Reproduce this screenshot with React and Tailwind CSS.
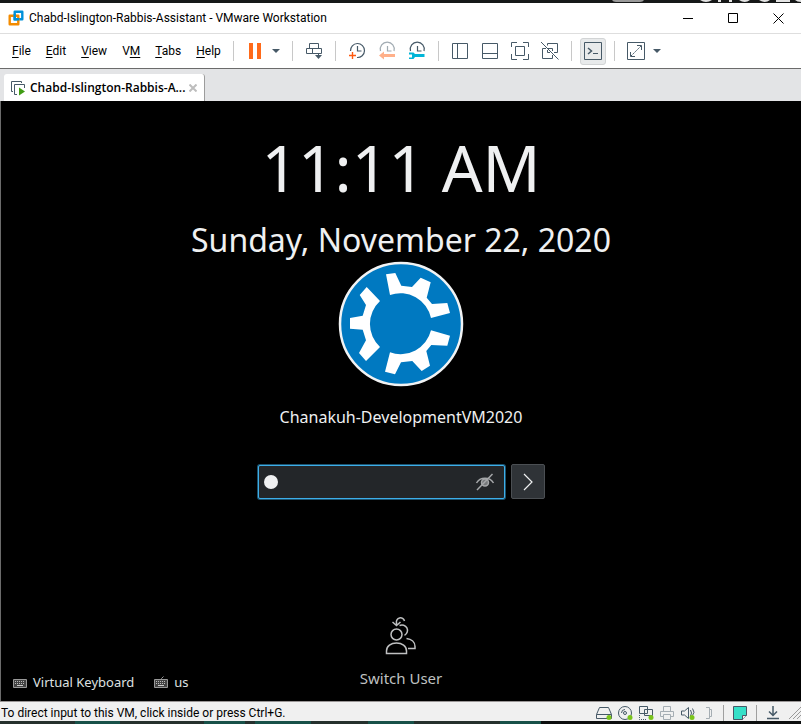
import React from 'react';

const ink = '#465967';

function Icon({ w = 20, h = 20, children, stroke = ink, sw = 1, className = '' }) {
  return (
    <svg width={w} height={h} viewBox={`0 0 ${w} ${h}`} fill="none" stroke={stroke} strokeWidth={sw} className={`shrink-0 ${className}`} aria-hidden="true">
      {children}
    </svg>
  );
}

function Separator() {
  return <span className="mx-[6px] h-5 w-px shrink-0 bg-[#c8c8c8]" />;
}

function ToolButton({ label, children }) {
  return (
    <button aria-label={label} className="flex h-7 w-[30px] shrink-0 items-center justify-center">
      {children}
    </button>
  );
}

function Caret({ label }) {
  return (
    <button aria-label={label} className="flex h-7 w-3 shrink-0 items-center justify-center">
      <svg width="8" height="4" viewBox="0 0 8 4" fill={ink} aria-hidden="true"><path d="M0 0h8L4 4z" /></svg>
    </button>
  );
}

function MenuItem({ before = '', hot, after = '' }) {
  return (
    <button className="pl-2 pr-[7px]">
      {before}<span className="underline underline-offset-2">{hot}</span>{after}
    </button>
  );
}

function TitleBar() {
  return (
    <header className="flex h-[30px] shrink-0 items-center bg-white pl-2">
      <Icon w={16} h={16} stroke="none">
        <path d="M6.7 1.7h7.6v7.6H6.7z" stroke="#0091da" strokeWidth="2.4" strokeLinejoin="round" />
        <path d="M1.7 5.7h8.6v8.6H1.7z" stroke="#f38b00" strokeWidth="2.4" strokeLinejoin="round" />
        <path d="M6.7 4v5.3H11" stroke="#0091da" strokeWidth="2.4" />
      </Icon>
      <h1 className="flex-1 truncate pl-[5px]">Chabd-Islington-Rabbis-Assistant - VMware Workstation</h1>
      <button aria-label="Minimize" className="flex h-full w-[45px] items-center justify-center"><Icon w={11} h={11} stroke="#000"><path d="M0 5.5h10" /></Icon></button>
      <button aria-label="Maximize" className="flex h-full w-[45px] items-center justify-center"><Icon w={11} h={11} stroke="#000"><path d="M.5.5h9v9h-9z" /></Icon></button>
      <button aria-label="Close" className="flex h-full w-[45px] items-center justify-center"><Icon w={11} h={11} stroke="#000"><path d="M.5.5l10 10M10.5.5l-10 10" /></Icon></button>
    </header>
  );
}

function Toolbar() {
  return (
    <div className="flex h-[35px] shrink-0 items-center border-t border-[#dedede] bg-white pl-1">
      <nav className="flex w-[223px] shrink-0">
        <MenuItem hot="F" after="ile" />
        <MenuItem hot="E" after="dit" />
        <MenuItem hot="V" after="iew" />
        <MenuItem before="V" hot="M" />
        <MenuItem hot="T" after="abs" />
        <MenuItem hot="H" after="elp" />
      </nav>
      <Separator />
      <ToolButton label="Suspend"><Icon w={12} h={16} stroke="none"><path fill="#ff6a1a" d="M0 0h4v16H0zM8 0h4v16H8z" /></Icon></ToolButton>
      <Caret label="Power options" />
      <span className="w-1" />
      <Separator />
      <ToolButton label="Send Ctrl+Alt+Del">
        <Icon><path d="M5.500 2.500h9v5h-9zM2.500 7.500h6v5h-6zM8.500 7.500h9v5h-9zM14.500 12v3" /><path d="M11 14h7l-3.500 4z" fill={ink} stroke="none" /></Icon>
      </ToolButton>
      <Separator />
      <ToolButton label="Take snapshot">
        <Icon><path d="M3.500 10A7 7 0 1 1 10 16.500" strokeWidth="1.200" /><path d="M10.500 5v5h4" strokeWidth="1.200" /><path d="M2 14.500h7M5.500 11v7" stroke="#ff5a10" strokeWidth="1.400" /></Icon>
      </ToolButton>
      <ToolButton label="Revert snapshot">
        <Icon><g opacity=".5"><path d="M3.500 10a7 7 0 1 1 13.500 0" strokeWidth="1.200" /><path d="M10.500 5v5h4" strokeWidth="1.200" /></g><path d="M2 14.500l5-4V13h11v3H7v2.500z" fill="#ffb08a" stroke="none" /></Icon>
      </ToolButton>
      <ToolButton label="Manage snapshots">
        <Icon><path d="M3.500 10a7 7 0 1 1 13.500 0" strokeWidth="1.200" /><path d="M10.500 5v5h4" strokeWidth="1.200" /><path d="M2 11.500h4.500l1.500 1.500h9.500v3H8l-1.500 2H2v-1.500h3v-3H2z" fill="#00b5d8" stroke="none" /></Icon>
      </ToolButton>
      <Separator />
      <ToolButton label="Show library"><Icon><path d="M2.500 2.500h15v15h-15zM7.500 2.500v15" /></Icon></ToolButton>
      <ToolButton label="Show thumbnails"><Icon><path d="M2.500 2.500h15v15h-15zM2.500 12.500h15" /></Icon></ToolButton>
      <ToolButton label="Full screen"><Icon><path d="M1.500 6V1.500H7M13 1.500h5.500V6M18.500 13v5.500H13M7 18.500H1.500V13M5.500 5.500h9v9h-9z" /></Icon></ToolButton>
      <ToolButton label="Unity mode"><Icon><path d="M7.500 2.500h10v9H14M6 7.500H2.500v10h10V14M7.500 2.500v2M8 7.500h4.500V10M7.500 9v2.500H10" /><path d="M1 1l17.500 17.500" /></Icon></ToolButton>
      <Separator />
      <ToolButton label="Console view">
        <span className="flex h-[27px] w-[26px] shrink-0 items-center justify-center rounded-[3px] border border-[#d2d4d5] bg-[#e8eaeb]">
          <Icon w={18} h={18}><path d="M.5.5h17v17H.5zM9 11.500h5" /><path d="M4 6l3.500 3L4 12" strokeWidth="1.500" /></Icon>
        </span>
      </ToolButton>
      <Separator />
      <ToolButton label="Stretch guest"><Icon w={18} h={18}><path d="M.5.5h17v17H.5zM10 3.500h4.500V8M3.500 10v4.500H8" /><path d="M4 14L14 4" strokeDasharray="2 1" /></Icon></ToolButton>
      <Caret label="Stretch options" />
    </div>
  );
}

function TabStrip() {
  return (
    <div className="flex h-[33px] shrink-0 items-end border-t border-[#6b6b6b] bg-[#e3e4e6] pl-1">
      <div className="flex h-[27px] w-[201px] items-center rounded-t-[3px] border-r border-[#9c9c9c] bg-white pl-[6px]">
        <Icon w={16} h={16}>
          <path d="M3 11.500H1.500v-10h10V3M7 14.500H4.500v-10h10V8" />
          <path d="M9 7.500l6 4-6 4z" fill="#3f9c14" stroke="none" />
        </Icon>
        <span className="whitespace-nowrap pl-1 font-['Open_Sans','Noto_Sans',sans-serif] font-semibold">Chabd-Islington-Rabbis-A...</span>
        <button aria-label="Close tab" className="ml-auto mr-[7px]"><Icon w={8} h={8} stroke="#bdbdbd" sw={2}><path d="M.5.5l7 7M7.500.5l-7 7" /></Icon></button>
      </div>
    </div>
  );
}

function Avatar() {
  return (
    <svg width="126" height="126" viewBox="0 0 126 126" role="img" aria-label="Kubuntu" className="shrink-0">
      <circle cx="63" cy="63" r="61" fill="#0079c1" stroke="#f1f3f4" strokeWidth="2.500" />
      <path fill="#fff" d="M48 13.300L57.300 12 63.300 24.700 74 26 82.700 16.700 92.700 21.300 88.700 36.700 94 43 109.300 42 112 52 93 57A31.300 31.300 0 0 0 52 34z" />
      <path fill="#fff" d="M93 69.300L112 74.700 109.300 84.700 93.300 84 88.300 90 92 104.700 83.700 110 74.300 100 63 101.300 57 113.300 47 110.700 52 91.300A31.300 31.300 0 0 0 93 69.300z" />
      <path fill="#fff" d="M28.700 26L42 40A31.300 31.300 0 0 0 42 86L28 100 21 92 28 79.300 24.700 68.700 12 67.700V57L24.700 54.700 28 44 21.700 34z" />
    </svg>
  );
}

function Keyboard({ cable }) {
  return (
    <Icon w={14} h={12} stroke="#999">
      {cable && <path d="M7.500 4V2.500l2-2" />}
      <path d="M.5 3.500h13v8H.5z" fill="#444" />
      <path d="M2 5.500h10M2 7.500h10" stroke="#bbb" strokeDasharray="1 1" />
      <path d="M4 9.500h6" stroke="#ccc" />
    </Icon>
  );
}

function LockScreen() {
  return (
    <main className="flex flex-1 flex-col items-center border-l border-[#6b6b6b] bg-black pt-[23px] font-['Noto_Sans',sans-serif] text-[#eff0f1]">
      <time className="text-[64px] leading-[88px]">11:11 AM</time>
      <p className="mt-[6px] text-[32px] leading-[43px]">Sunday, November 22, 2020</p>
      <Avatar />
      <p className="mt-[19px] text-base leading-[22px]">Chanakuh-DevelopmentVM2020</p>
      <form className="mt-9 flex items-center gap-[6px]" onSubmit={(e) => e.preventDefault()}>
        <div className="flex h-[34px] w-[247px] items-center rounded-[2px] border border-[#3daee9] bg-[#232629] pl-[5px] pr-[9px] ring-1 ring-[#1c536f]">
          <span className="h-[14px] w-[14px] shrink-0 rounded-full bg-[#eff0f1]" />
          <input type="password" aria-label="Password" className="h-full min-w-0 flex-1 bg-transparent outline-none" />
          <button type="button" aria-label="Show password">
            <Icon w={20} h={18} stroke="#a5a7a9" sw={1.500}>
              <path d="M1.500 10C5 3.500 15 3.500 18.500 10" />
              <circle cx="10" cy="9.500" r="3.500" fill="#76797b" />
              <path d="M2 17L17.500 1" />
            </Icon>
          </button>
        </div>
        <button aria-label="Log in" className="flex h-[35px] w-[34px] items-center justify-center rounded-[2px] border border-[#4b4f53] bg-[#2f3337]">
          <Icon w={10} h={18} stroke="#eff0f1" sw={1.200}><path d="M1 1l8 8-8 8" /></Icon>
        </button>
      </form>
      <div className="mt-auto grid w-full grid-cols-3 items-end pb-[9px]">
        <div className="flex items-center gap-5 whitespace-nowrap pl-3 text-[13px] leading-5 text-[#dfe0e1]">
          <button className="flex items-center gap-[6px]"><Keyboard />Virtual Keyboard</button>
          <button className="flex items-center gap-[6px]"><Keyboard cable />us</button>
        </div>
        <button className="flex flex-col items-center pb-1 text-[15px] leading-5 text-[#bfc0c1]">
          <Icon w={32} h={40} stroke="#bfc0c1" sw={1.500}>
            <circle cx="11.500" cy="18.500" r="5.500" />
            <path d="M1.500 37.500v-2.500c0-5 4.500-8 10-8s10 3 10 8v2.500z" />
            <path d="M14.500 9.500a5.500 5.500 0 1 1 5 9.800M21.500 22.500c5 .500 8.500 3.500 8.500 8v2h-7" />
            <path d="M11.500 9.500V7a4 4 0 0 1 8-2M7.500 6l4 3.500 4-3.500" />
          </Icon>
          <span className="mt-3">Switch User</span>
        </button>
      </div>
    </main>
  );
}

function StatusBar() {
  return (
    <footer className="flex h-5 shrink-0 items-center border-t border-[#9a9696] bg-[#f0f0f0] pl-px pt-[3px]">
      <p className="flex-1 truncate">To direct input to this VM, click inside or press Ctrl+G.</p>
      <div className="flex items-center gap-[5px]">
        <Icon w={16} h={16}><path d="M3.500 2.500h9l3 7v4H.5v-4zM.5 9.500h15" /><circle cx="13" cy="12.500" r="2.500" fill="#7ac41c" stroke="none" /></Icon>
        <Icon w={16} h={16}><circle cx="8" cy="8" r="6.500" /><circle cx="8" cy="8" r="1.500" /><path d="M4.500 8A3.500 3.500 0 0 1 8 4.500" /><circle cx="13" cy="12.500" r="2.500" fill="#7ac41c" stroke="none" /></Icon>
        <Icon w={16} h={16}><path d="M1.500 1.500h8v7h-8zM6.500 4.500h8v6h-8z" fill="#f0f0f0" /><path d="M1.500 10v4.500H9" strokeDasharray="1 1" /><circle cx="13" cy="12.500" r="2.500" fill="#7ac41c" stroke="none" /></Icon>
        <Icon w={16} h={16} stroke="#a5adb3"><path d="M4.500 6V1.500h7V6M4 11.500H1.500v-5h13v5H12M4.500 9.500h7v5h-7z" /></Icon>
        <Icon w={16} h={16}><path d="M1.500 6h3l4-3.500v11L4.500 10h-3z" /><path d="M10.500 5q2 3 0 6M12.500 3.500q3 4 0 7" /><circle cx="12" cy="12.500" r="2.500" fill="#7ac41c" stroke="none" /></Icon>
        <Icon w={16} h={16} stroke="#a5adb3"><path d="M5 2.500h3.500v11H5M8.500 4.500h2v7h-2" /></Icon>
      </div>
      <span className="ml-[6px] mr-[9px] h-4 w-px bg-[#a0a0a0]" />
      <Icon w={14} h={14}><path d="M.5.5h13v9l-4 4H.5z" fill="#36e0c8" /><path d="M13.500 9.500h-4v4" fill="#f0f0f0" /></Icon>
      <span className="ml-[9px] mr-[9px] h-4 w-px bg-[#a0a0a0]" />
      <Icon w={14} h={16} sw={1.500}><path d="M7 1v9M3 6.500l4 4 4-4M1 13.500h12" /></Icon>
      <Icon w={12} h={14} stroke="#999" className="ml-[9px]"><path d="M0 13L12 1M4 13l8-8M8 13l4-4" /></Icon>
    </footer>
  );
}

function TopEdge() {
  return (
    <div className="flex h-[3px] shrink-0 justify-end bg-[#161818]">
      <svg width="201" height="3" viewBox="0 0 201 3" fill="#e4e4e4" aria-hidden="true">
        <path d="M12 0h32q-1 2-4 2H16q-3 0-4-2z" fill="#9a9a9a" />
        <path d="M100 0h12q-6 4-12 0zM118 0h3v2h-3zM129 0h3v2h-3zM139 0h11q-5 4-11 0zM159 0h11q-5 4-11 0zM176 0h14v2h-14zM195 0h6v2q-4 0-6-2z" />
      </svg>
    </div>
  );
}

function BottomEdge() {
  return (
    <div className="h-[3px] shrink-0 bg-[#0c0e0e]">
      <svg width="541" height="3" viewBox="0 0 541 3" fill="#175048" className="block" aria-hidden="true">
        <path d="M0 0h541v3H0z" fill="#25302d" />
        <path d="M75 0h45v3H75zM204 0h41v3h-41zM255 0h56v3h-56zM368 0h46v3h-46zM500 0h41v3h-41z" />
      </svg>
    </div>
  );
}

export default function App() {
  return (
    <div className="flex h-screen min-h-[560px] flex-col overflow-hidden font-[Roboto,'Noto_Sans',sans-serif] text-[12px] leading-4 text-black">
      <TopEdge />
      <TitleBar />
      <Toolbar />
      <TabStrip />
      <LockScreen />
      <StatusBar />
      <BottomEdge />
    </div>
  );
}
